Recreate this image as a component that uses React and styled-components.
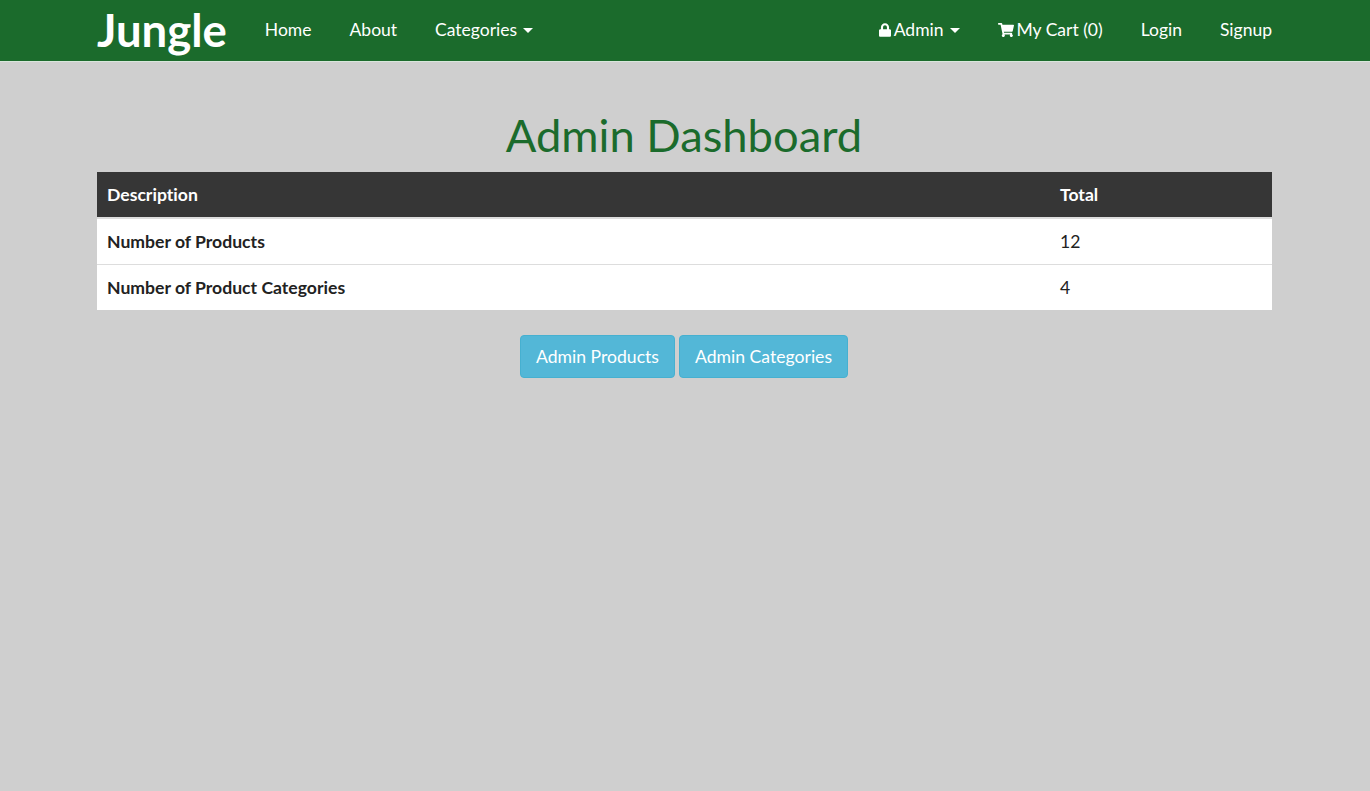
import React from "react";
import styled, { createGlobalStyle } from "styled-components";
import { FaLock, FaShoppingCart } from "react-icons/fa";

const GlobalStyle = createGlobalStyle`
  html, body {
    margin: 0;
    padding: 0;
    min-height: 100%;
    background: #cfcfcf;
    font-family: Lato, "Liberation Sans", sans-serif;
    font-size: 17.6px;
    color: #222;
  }
`;

const Page = styled.div`
  padding-right: 1px;
`;

const Nav = styled.nav`
  height: 61px;
  background: #1b6b2c;
  border-bottom: 1px solid #d9e6dc;
  margin-right: -1px;
  padding-right: 1px;
`;

const NavInner = styled.div`
  width: 1175px;
  height: 60px;
  margin: 0 auto;
  display: flex;
  justify-content: space-between;
  align-items: center;
`;

const NavGroup = styled.div`
  display: flex;
  align-items: center;
`;

const Brand = styled.a`
  font-size: 45.5px;
  font-weight: 700;
  color: #fff;
  line-height: 60px;
  margin-right: 19px;
`;

const NavLink = styled.a`
  display: flex;
  align-items: center;
  gap: 3px;
  padding: 0 19px;
  color: #fff;
  font-size: 17.5px;
  line-height: 60px;

  &:last-child {
    padding-right: 0;
  }
`;

const LockIcon = styled(FaLock)`
  width: 12px;
  height: 14px;
`;

const Caret = styled.span`
  display: inline-block;
  width: 0;
  height: 0;
  margin-left: 3px;
  border-top: 5px solid #fff;
  border-left: 5px solid transparent;
  border-right: 5px solid transparent;
`;

const Main = styled.main`
  width: 1175px;
  margin: 0 auto;
`;

const Title = styled.h1`
  margin: 45px 0 10px;
  padding-right: 1px;
  text-align: center;
  font-size: 45.3px;
  font-weight: 400;
  line-height: 55px;
  color: #1b6b2c;
`;

const Table = styled.table`
  width: 100%;
  border-collapse: collapse;
  background: #fff;
  font-size: 17.6px;
  font-variant-ligatures: none;
`;

const HeadCell = styled.th`
  height: 46px;
  padding: 0 10px;
  box-sizing: border-box;
  text-align: left;
  font-weight: 700;
  color: #fff;
  background: #363636;
  border-bottom: 2px solid #ddd;
  width: ${(props) => props.width || "auto"};
`;

const RowHead = styled.th`
  height: 46px;
  padding: 0 10px;
  box-sizing: border-box;
  text-align: left;
  font-weight: 700;
  border-top: 1px solid #ddd;
`;

const Cell = styled.td`
  height: 46px;
  padding: 0 10px;
  box-sizing: border-box;
  border-top: 1px solid #ddd;
`;

const Actions = styled.div`
  display: flex;
  justify-content: center;
  gap: 4px;
  margin-top: 25px;
  padding-right: 1px;
`;

const Button = styled.a`
  display: block;
  padding: 0 15px;
  height: 41px;
  line-height: 41px;
  color: #fff;
  font-size: 17.6px;
  background: #53b7d7;
  border: 1px solid #46b0d0;
  border-radius: 4px;
`;

export default function App() {
  return (
    <Page>
      <GlobalStyle />
      <Nav>
        <NavInner>
          <NavGroup>
            <Brand>Jungle</Brand>
            <NavLink>Home</NavLink>
            <NavLink>About</NavLink>
            <NavLink>
              Categories <Caret />
            </NavLink>
          </NavGroup>
          <NavGroup>
            <NavLink>
              <LockIcon /> Admin <Caret />
            </NavLink>
            <NavLink>
              <FaShoppingCart size={16} /> My Cart (0)
            </NavLink>
            <NavLink>Login</NavLink>
            <NavLink>Signup</NavLink>
          </NavGroup>
        </NavInner>
      </Nav>
      <Main>
        <Title>Admin Dashboard</Title>
        <Table>
          <thead>
            <tr>
              <HeadCell>Description</HeadCell>
              <HeadCell width="222px">Total</HeadCell>
            </tr>
          </thead>
          <tbody>
            <tr>
              <RowHead>Number of Products</RowHead>
              <Cell>12</Cell>
            </tr>
            <tr>
              <RowHead>Number of Product Categories</RowHead>
              <Cell>4</Cell>
            </tr>
          </tbody>
        </Table>
        <Actions>
          <Button>Admin Products</Button>
          <Button>Admin Categories</Button>
        </Actions>
      </Main>
    </Page>
  );
}
